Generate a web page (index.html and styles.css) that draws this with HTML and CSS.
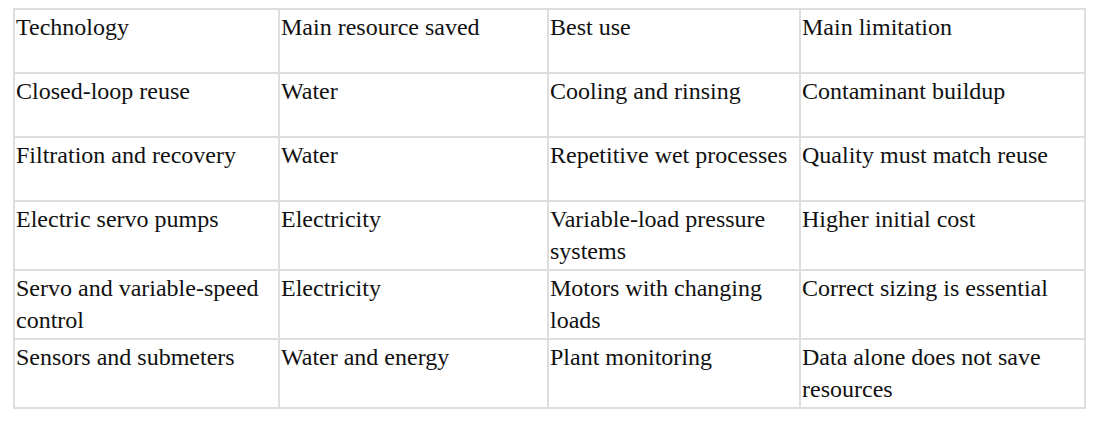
FILE: index.html
```html
<!DOCTYPE html>
<html>
<head>
<meta charset="utf-8">
<link rel="stylesheet" href="styles.css">
</head>
<body>
<div class="grid">
  <div class="cell">Technology</div><div class="cell">Main resource saved</div><div class="cell">Best use</div><div class="cell">Main limitation</div>
  <div class="cell">Closed-loop reuse</div><div class="cell">Water</div><div class="cell">Cooling and rinsing</div><div class="cell">Contaminant buildup</div>
  <div class="cell">Filtration and recovery</div><div class="cell">Water</div><div class="cell">Repetitive wet processes</div><div class="cell">Quality must match reuse</div>
  <div class="cell">Electric servo pumps</div><div class="cell">Electricity</div><div class="cell">Variable-load pressure systems</div><div class="cell">Higher initial cost</div>
  <div class="cell">Servo and variable-speed control</div><div class="cell">Electricity</div><div class="cell">Motors with changing loads</div><div class="cell">Correct sizing is essential</div>
  <div class="cell">Sensors and submeters</div><div class="cell">Water and energy</div><div class="cell">Plant monitoring</div><div class="cell">Data alone does not save resources</div>
</div>
</body>
</html>
```

FILE: styles.css
```css
html, body {
  margin: 0;
  background: #ffffff;
}
body {
  padding: 8px 0 0 13px;
  color: #111111;
  font-size: 24px;
  line-height: 32px;
}
.grid {
  display: grid;
  grid-template-columns: 263px 267px 250px 283px;
  gap: 2px;
  padding: 2px;
  width: 1073px;
  box-sizing: border-box;
  background: #dedede;
}
.cell {
  font-family: "Liberation Serif";
  background: #ffffff;
  min-height: 62px;
  box-sizing: border-box;
  padding: 1px 0 2px 1px;
}
```
